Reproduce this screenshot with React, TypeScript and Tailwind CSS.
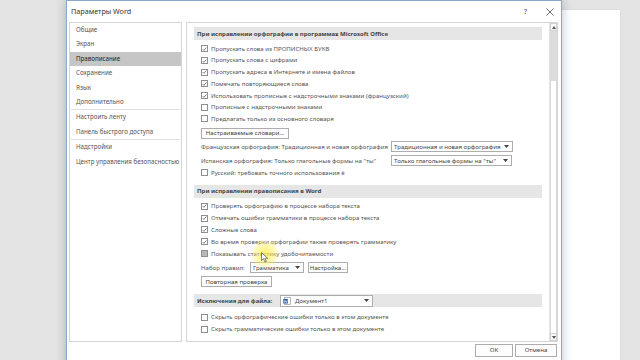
import React from "react";

const F = { fontFamily: '"Noto Sans", "Open Sans", sans-serif' };

function Check({ checked, filled }: { checked?: boolean; filled?: boolean }) {
  return (
    <div
      className={
        "w-[7px] h-[7px] border border-[#8f8f8f] flex items-center justify-center shrink-0 " +
        (filled ? "bg-[#b8b8b8]" : "bg-white")
      }
    >
      {checked && (
        <svg width="6" height="6" viewBox="0 0 6 6">
          <path d="M0.8 3.1 L2.3 4.6 L5.2 1.2" stroke="#555" strokeWidth="0.9" fill="none" />
        </svg>
      )}
    </div>
  );
}

function Row({ checked, filled, text, h = "h-[11.7px]" }: { checked?: boolean; filled?: boolean; text: string; h?: string }) {
  return (
    <div className={"flex items-center pl-[14px] " + h}>
      <Check checked={checked} filled={filled} />
      <span className="ml-[3px] text-[6.1px] text-[#555] whitespace-nowrap leading-none">{text}</span>
    </div>
  );
}

function Header({ text }: { text: string }) {
  return (
    <div className="mx-[7px] h-[13px] bg-[#e6e6e6] flex items-center pl-[3px]">
      <span className="text-[6px] font-bold text-[#444] whitespace-nowrap leading-none">{text}</span>
    </div>
  );
}

function Btn({ text, w }: { text: string; w: string }) {
  return (
    <div className={"h-[11px] border border-[#adadad] bg-[#fdfdfd] flex items-center justify-center text-[6.1px] text-[#444] whitespace-nowrap leading-none " + w}>
      {text}
    </div>
  );
}

function Select({ text, w }: { text: string; w: string }) {
  return (
    <div className={"h-[11px] border border-[#adadad] bg-white flex items-center justify-between pl-[2px] pr-[3px] text-[6.1px] text-[#444] whitespace-nowrap leading-none overflow-hidden " + w}>
      <span>{text}</span>
      <svg width="5" height="3" viewBox="0 0 5 3" className="shrink-0">
        <path d="M0 0 L5 0 L2.5 3 Z" fill="#444" />
      </svg>
    </div>
  );
}

const navTop = ["Общие", "Экран", "Правописание", "Сохранение", "Язык", "Дополнительно"];

function NavItem({ t, sel }: { t: string; sel?: boolean }) {
  return (
    <div
      className={
        "h-[14.4px] flex items-center pl-[6px] text-[6.2px] leading-none whitespace-nowrap " +
        (sel ? "bg-[#c6c6c6] text-[#222]" : "text-[#555]")
      }
    >
      {t}
    </div>
  );
}

export default function App() {
  return (
    <div className="w-[640px] h-[360px] bg-[#e4e4e4] overflow-hidden relative flex" style={F}>
      <div className="w-[66px] shrink-0" />
      <div className="w-[496px] h-[372px] shrink-0 bg-white border border-[#8da8c8] shadow-[0_0_10px_rgba(0,0,0,0.25)] flex flex-col relative z-10">
        <div className="h-[21px] flex items-center pl-[4px] pr-[7px] shrink-0">
          <span className="text-[7.2px] text-[#333] leading-none">Параметры Word</span>
          <div className="flex-1" />
          <span className="text-[7.5px] text-[#444] leading-none mr-[19px]">?</span>
          <svg width="8" height="8" viewBox="0 0 8 8">
            <path d="M0.5 0.5 L7.5 7.5 M7.5 0.5 L0.5 7.5" stroke="#444" strokeWidth="0.8" />
          </svg>
        </div>
        <div className="flex pl-[2px] pr-[3px] gap-[4px] h-[320px] shrink-0">
          <div className="w-[113px] border border-[#d5d5d5] flex flex-col">
            {navTop.map((t) => (
              <NavItem key={t} t={t} sel={t === "Правописание"} />
            ))}
            <div className="h-px bg-[#e0e0e0] mx-[1px]" />
            <NavItem t="Настроить ленту" />
            <NavItem t="Панель быстрого доступа" />
            <div className="h-px bg-[#e0e0e0] mx-[1px]" />
            <NavItem t="Надстройки" />
            <NavItem t="Центр управления безопасностью" />
          </div>
          <div className="flex-1 border border-[#d5d5d5] flex">
            <div className="flex-1 flex flex-col pt-[4px]">
              <Header text="При исправлении орфографии в программах Microsoft Office" />
              <div className="h-[3px]" />
              <Row checked text="Пропускать слова из ПРОПИСНЫХ БУКВ" />
              <Row checked text="Пропускать слова с цифрами" />
              <Row checked text="Пропускать адреса в Интернете и имена файлов" />
              <Row checked text="Помечать повторяющиеся слова" />
              <Row checked text="Использовать прописные с надстрочными знаками (французский)" />
              <Row text="Прописные с надстрочными знаками" />
              <Row text="Предлагать только из основного словаря" />
              <div className="pl-[14px] mt-[3px]">
                <Btn text="Настраиваемые словари..." w="w-[88px]" />
              </div>
              <div className="h-[12px] mt-[2px] flex items-center pl-[14px]">
                <span className="text-[6.1px] text-[#555] whitespace-nowrap leading-none w-[190px]">Французская орфография: Традиционная и новая орфография</span>
                <Select text="Традиционная и новая орфография" w="w-[122px]" />
              </div>
              <div className="h-[12px] mt-[2px] flex items-center pl-[14px]">
                <span className="text-[6.1px] text-[#555] whitespace-nowrap leading-none w-[190px]">Испанская орфография: Только глагольные формы на "ты"</span>
                <Select text='Только глагольные формы на "ты"' w="w-[121px]" />
              </div>
              <Row text="Русский: требовать точного использования ё" />
              <div className="h-[6px]" />
              <Header text="При исправлении правописания в Word" />
              <div className="h-[3px]" />
              <Row checked text="Проверять орфографию в процессе набора текста" h="h-[11.8px]" />
              <Row checked text="Отмечать ошибки грамматики в процессе набора текста" h="h-[11.8px]" />
              <Row checked text="Сложные слова" h="h-[11.8px]" />
              <Row checked text="Во время проверки орфографии также проверять грамматику" h="h-[11.8px]" />
              <Row filled text="Показывать статистику удобочитаемости" h="h-[11.8px]" />
              <div className="h-[13px] mt-[2px] flex items-center pl-[14px]">
                <span className="text-[6.1px] text-[#555] whitespace-nowrap leading-none w-[49px]">Набор правил:</span>
                <Select text="Грамматика" w="w-[54px]" />
                <div className="w-[4px]" />
                <Btn text="Настройка..." w="w-[40px]" />
              </div>
              <div className="pl-[14px] mt-[2px]">
                <Btn text="Повторная проверка" w="w-[71px]" />
              </div>
              <div className="h-[7px]" />
              <div className="mx-[7px] h-[13px] bg-[#e6e6e6] flex items-center pl-[3px]">
                <span className="text-[6px] font-bold text-[#444] whitespace-nowrap leading-none w-[83px]">Исключения для файла:</span>
                <div className="h-[12px] w-[93px] border border-[#adadad] bg-white flex items-center pl-[2px] pr-[3px]">
                  <svg width="8" height="8" viewBox="0 0 8 8">
                    <rect x="1.5" y="0.5" width="6" height="7" fill="#fff" stroke="#7a8aa0" strokeWidth="0.6" />
                    <rect x="0.3" y="2" width="4.5" height="4.5" fill="#2b579a" />
                    <path d="M1 3 L1.7 5.7 L2.55 3.6 L3.4 5.7 L4.1 3" stroke="#fff" strokeWidth="0.5" fill="none" />
                  </svg>
                  <span className="ml-[4px] text-[6.1px] text-[#444] leading-none flex-1">Документ1</span>
                  <svg width="5" height="3" viewBox="0 0 5 3">
                    <path d="M0 0 L5 0 L2.5 3 Z" fill="#444" />
                  </svg>
                </div>
              </div>
              <div className="h-[4px]" />
              <Row text="Скрыть орфографические ошибки только в этом документе" h="h-[12px]" />
              <Row text="Скрыть грамматические ошибки только в этом документе" h="h-[12px]" />
            </div>
            <div className="w-[8px] flex flex-col border-l border-[#e3e3e3]">
              <div className="h-[8px] flex items-center justify-center border border-[#d0d0d0] bg-[#f6f6f6]">
                <svg width="4" height="3" viewBox="0 0 4 3">
                  <path d="M0 3 L4 3 L2 0 Z" fill="#555" />
                </svg>
              </div>
              <div className="h-[50px] bg-[#dcdcdc]" />
              <div className="flex-1 border-x border-[#d8d8d8] bg-white" />
              <div className="h-[8px] flex items-center justify-center border border-[#d0d0d0] bg-[#f6f6f6]">
                <svg width="4" height="3" viewBox="0 0 4 3">
                  <path d="M0 0 L4 0 L2 3 Z" fill="#555" />
                </svg>
              </div>
            </div>
          </div>
        </div>
        <div className="flex justify-end pr-[4px] pt-[2px] gap-[2px]">
          <Btn text="OK" w="w-[38px] h-[13px]" />
          <Btn text="Отмена" w="w-[42px] h-[13px]" />
        </div>
        <div
          className="absolute left-[183px] top-[238px] w-[30px] h-[30px] rounded-full pointer-events-none"
          style={{ background: "radial-gradient(circle, rgba(255,235,60,0.75) 0%, rgba(255,240,90,0.45) 45%, rgba(255,245,120,0) 72%)" }}
        />
        <svg className="absolute left-[194px] top-[251px]" width="8" height="11" viewBox="0 0 8 11">
          <path d="M0.5 0.5 L0.5 8.5 L2.5 6.7 L4 10 L5.3 9.4 L3.9 6.3 L6.6 6.3 Z" fill="#fff" stroke="#333" strokeWidth="0.6" />
        </svg>
      </div>
      <div className="w-[58px] mt-[10px] bg-white shrink-0 shadow-[0_0_2px_rgba(0,0,0,0.1)]" />
    </div>
  );
}
